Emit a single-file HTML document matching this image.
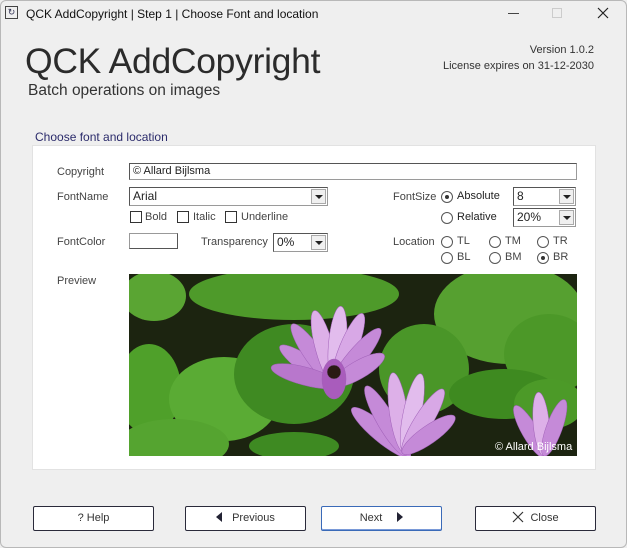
<!DOCTYPE html>
<html><head><meta charset="utf-8"><style>
*{box-sizing:border-box}
body{margin:0;width:627px;height:548px;background:#efefef;font-family:"Liberation Sans",sans-serif;position:relative;overflow:hidden;color:#333}
.a{position:absolute;white-space:nowrap}
.win{position:absolute;left:0;top:0;width:627px;height:548px;border:1px solid #b8b8b8;border-radius:6px}
.s{font-size:11px;color:#444}
.inp{position:absolute;background:#fff;border:1px solid #9a9a9a;border-left-color:#555;border-top-color:#555;font-size:11px;color:#222;padding:1px 3px}
.dd{position:absolute;width:15px;height:15px;right:1px;top:1px;background:#f0f0f0;border:1px solid #aaa}
.dd:after{content:"";position:absolute;left:3px;top:5px;border-left:4px solid transparent;border-right:4px solid transparent;border-top:4px solid #222}
.cb{position:absolute;width:12px;height:12px;border:1px solid #333;background:#fff}
.rb{position:absolute;width:12px;height:12px;border:1px solid #555;border-radius:50%;background:#fff}
.rb.on:after{content:"";position:absolute;left:3px;top:3px;width:4px;height:4px;border-radius:50%;background:#333}
.btn{position:absolute;top:506px;width:121px;height:25px;border:1px solid #2a2a3a;border-radius:2px;background:#fff;font-size:11px;color:#333;text-align:center;line-height:22px}
</style></head><body>
<div class="win"></div>
<div class="a" style="left:5px;top:6px;width:13px;height:13px;border:1px solid #444;font-size:9px;line-height:11px;text-align:center;color:#335">↻</div>
<div class="a" style="left:26px;top:7px;font-size:12px;color:#111">QCK AddCopyright | Step 1 | Choose Font and location</div>
<div class="a" style="left:508px;top:13px;width:11px;height:1px;background:#444"></div>
<div class="a" style="left:552px;top:8px;width:10px;height:10px;border:1px solid #ccc"></div>
<svg class="a" style="left:597px;top:7px" width="12" height="12"><path d="M1 1L11 11M11 1L1 11" stroke="#222" stroke-width="1.2"/></svg>
<div class="a" style="left:25px;top:41px;font-size:35.5px;color:#2b2b2b;letter-spacing:-0.3px">QCK AddCopyright</div>
<div class="a" style="left:28px;top:82px;font-size:15.5px;color:#333">Batch operations on images</div>
<div class="a" style="right:33px;top:42px;font-size:11px;color:#333;text-align:right;line-height:16px">Version 1.0.2<br>License expires on 31-12-2030</div>
<div class="a" style="left:35px;top:130px;font-size:12px;color:#2b2b6b">Choose font and location</div>
<div class="a" style="left:32px;top:145px;width:564px;height:325px;background:#fff;border:1px solid #e2e2e2"></div>
<div class="a s" style="left:57px;top:166px">Copyright</div>
<div class="inp" style="left:129px;top:163px;width:448px;height:17px">© Allard Bijlsma</div>
<div class="a s" style="left:57px;top:191px">FontName</div>
<div class="inp" style="left:129px;top:187px;width:199px;height:19px;font-size:12px">Arial<div class="dd"></div></div>
<div class="cb" style="left:130px;top:211px"></div><div class="a s" style="left:145px;top:211px">Bold</div>
<div class="cb" style="left:177px;top:211px"></div><div class="a s" style="left:193px;top:211px">Italic</div>
<div class="cb" style="left:225px;top:211px"></div><div class="a s" style="left:241px;top:211px">Underline</div>
<div class="a s" style="left:57px;top:236px">FontColor</div>
<div class="a" style="left:129px;top:233px;width:49px;height:16px;border:1px solid #999;border-right-color:#555;border-bottom-color:#555;background:#fff"></div>
<div class="a s" style="left:201px;top:236px">Transparency</div>
<div class="inp" style="left:273px;top:233px;width:55px;height:19px;font-size:12px">0%<div class="dd"></div></div>
<div class="a s" style="left:393px;top:191px">FontSize</div>
<div class="rb on" style="left:441px;top:191px"></div><div class="a s" style="left:457px;top:190px;color:#222">Absolute</div>
<div class="rb" style="left:441px;top:212px"></div><div class="a s" style="left:457px;top:211px;color:#222">Relative</div>
<div class="inp" style="left:513px;top:187px;width:63px;height:19px;font-size:12px">8<div class="dd"></div></div>
<div class="inp" style="left:513px;top:208px;width:63px;height:19px;font-size:12px">20%<div class="dd"></div></div>
<div class="a s" style="left:393px;top:236px">Location</div>
<div class="rb" style="left:441px;top:236px"></div><div class="a s" style="left:457px;top:235px">TL</div>
<div class="rb" style="left:489px;top:236px"></div><div class="a s" style="left:505px;top:235px">TM</div>
<div class="rb" style="left:537px;top:236px"></div><div class="a s" style="left:553px;top:235px">TR</div>
<div class="rb" style="left:441px;top:252px"></div><div class="a s" style="left:457px;top:251px">BL</div>
<div class="rb" style="left:489px;top:252px"></div><div class="a s" style="left:505px;top:251px">BM</div>
<div class="rb on" style="left:537px;top:252px"></div><div class="a s" style="left:553px;top:251px">BR</div>
<div class="a s" style="left:57px;top:275px">Preview</div>
<svg class="a" style="left:129px;top:274px" width="448" height="182" viewBox="0 0 448 182">
<rect width="448" height="182" fill="#1c2410"/>
<g>
<ellipse cx="25" cy="22" rx="32" ry="25" fill="#5aa533"/>
<ellipse cx="165" cy="20" rx="105" ry="26" fill="#4e9a2a"/>
<ellipse cx="380" cy="40" rx="75" ry="50" fill="#56a030"/>
<ellipse cx="420" cy="80" rx="45" ry="40" fill="#4c9828"/>
<ellipse cx="20" cy="115" rx="32" ry="45" fill="#4fa02a"/>
<ellipse cx="95" cy="125" rx="55" ry="42" fill="#5aab34"/>
<ellipse cx="45" cy="170" rx="55" ry="25" fill="#55a430"/>
<ellipse cx="165" cy="100" rx="60" ry="50" fill="#3f8a22"/>
<ellipse cx="295" cy="95" rx="45" ry="45" fill="#4a9628"/>
<ellipse cx="375" cy="120" rx="55" ry="25" fill="#3e8a20"/>
<ellipse cx="420" cy="130" rx="35" ry="25" fill="#4c9a28"/>
<ellipse cx="165" cy="172" rx="45" ry="14" fill="#3e8a22"/>
</g>
<g fill="#c58ad8" stroke="#a060b8" stroke-width="0.5">
<g transform="translate(205,110)">
<ellipse rx="9" ry="38" transform="rotate(-55) translate(0,-28)"/>
<ellipse rx="9" ry="38" transform="rotate(-35) translate(0,-35)"/>
<ellipse rx="9" ry="38" transform="rotate(-15) translate(0,-38)" fill="#ddb0e8"/>
<ellipse rx="9" ry="38" transform="rotate(5) translate(0,-40)" fill="#e2bced"/>
<ellipse rx="9" ry="38" transform="rotate(22) translate(0,-38)" fill="#d8a8e6"/>
<ellipse rx="9" ry="38" transform="rotate(40) translate(0,-34)"/>
<ellipse rx="9" ry="30" transform="rotate(60) translate(0,-28)"/>
<ellipse rx="9" ry="35" transform="rotate(-75) translate(0,-30)" fill="#b877cc"/>
<ellipse rx="12" ry="20" cy="-5" fill="#a95cbc"/>
<circle cy="-12" r="7" fill="#2a1a14"/>
</g>
<g transform="translate(275,178)">
<ellipse rx="9" ry="38" transform="rotate(-50) translate(0,-30)"/>
<ellipse rx="9" ry="40" transform="rotate(-30) translate(0,-36)"/>
<ellipse rx="9" ry="40" transform="rotate(-8) translate(0,-40)" fill="#ddb0e8"/>
<ellipse rx="9" ry="40" transform="rotate(12) translate(0,-40)" fill="#e2bced"/>
<ellipse rx="9" ry="38" transform="rotate(32) translate(0,-36)" fill="#d8a8e6"/>
<ellipse rx="9" ry="32" transform="rotate(55) translate(0,-30)"/>
</g>
<g transform="translate(415,182)">
<ellipse rx="8" ry="30" transform="rotate(-30) translate(0,-28)"/>
<ellipse rx="8" ry="32" transform="rotate(-5) translate(0,-32)" fill="#ddb0e8"/>
<ellipse rx="8" ry="30" transform="rotate(20) translate(0,-30)"/>
</g>
</g>
<text x="366" y="176" font-family="Liberation Sans" font-size="11" fill="#fff">© Allard Bijlsma</text>
</svg>
<div class="btn" style="left:33px">? Help</div>
<div class="btn" style="left:185px"><span style="display:inline-block;border-top:5px solid transparent;border-bottom:5px solid transparent;border-right:6px solid #223;margin-right:10px;vertical-align:-1px"></span>Previous</div>
<div class="btn" style="left:321px;border-color:#3a6ab8;box-shadow:inset 0 -1px 0 #7a9ad8">Next<span style="display:inline-block;border-top:5px solid transparent;border-bottom:5px solid transparent;border-left:6px solid #223;margin-left:15px;vertical-align:-1px"></span></div>
<div class="btn" style="left:475px"><svg width="12" height="12" style="vertical-align:-2px;margin-right:6px"><path d="M1 1L11 11M11 1L1 11" stroke="#333" stroke-width="1.2"/></svg>Close</div>
</body></html>
